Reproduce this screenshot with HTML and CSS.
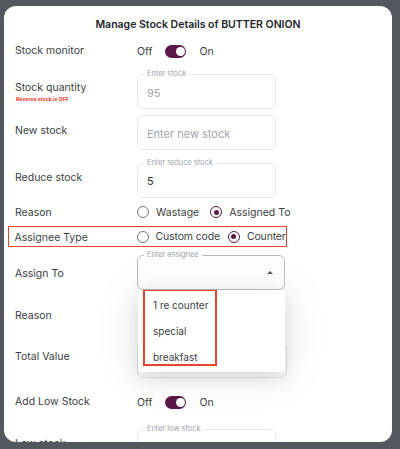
FILE: index.html
```html
<!DOCTYPE html>
<html lang="en">
<head>
<meta charset="utf-8">
<title>Manage Stock</title>
<link rel="stylesheet" href="styles.css">
</head>
<body>
<div class="modal">
  <h2 class="title">Manage Stock Details of BUTTER ONION</h2>

  <div class="row r-monitor">
    <div class="label">Stock monitor</div>
    <div class="toggle-group">
      <span>Off</span><span class="toggle"><span class="knob"></span></span><span>On</span>
    </div>
  </div>

  <div class="row r-qty">
    <div class="label">Stock quantity<div class="warn">Reverse stock is OFF</div></div>
    <div class="field"><span class="legend">Enter stock</span><span class="value muted">95</span></div>
  </div>

  <div class="row r-new">
    <div class="label">New stock</div>
    <div class="field"><span class="value placeholder">Enter new stock</span></div>
  </div>

  <div class="row r-reduce">
    <div class="label">Reduce stock</div>
    <div class="field"><span class="legend">Enter reduce stock</span><span class="value">5</span></div>
  </div>

  <div class="row r-reason">
    <div class="label">Reason</div>
    <div class="radios">
      <span class="radio"></span><span class="rtext">Wastage</span>
      <span class="radio checked"></span><span class="rtext">Assigned To</span>
    </div>
  </div>

  <div class="row r-assignee highlight">
    <div class="label">Assignee Type</div>
    <div class="radios">
      <span class="radio"></span><span class="rtext">Custom code</span>
      <span class="radio checked r-gap"></span><span class="rtext">Counter</span>
    </div>
  </div>

  <div class="row r-assign">
    <div class="label">Assign To</div>
    <div class="select-wrap">
      <div class="field select"><span class="legend">Enter assignee</span><span class="caret"></span></div>
      <div class="menu">
        <div class="menu-mark">
          <div class="option">1 re counter</div>
          <div class="option">special</div>
          <div class="option">breakfast</div>
        </div>
      </div>
    </div>
  </div>

  <div class="row r-reason2">
    <div class="label">Reason</div>
  </div>

  <div class="row r-total">
    <div class="label">Total Value</div>
    <div class="field wide"></div>
  </div>

  <div class="row r-low">
    <div class="label">Add Low Stock</div>
    <div class="toggle-group">
      <span>Off</span><span class="toggle"><span class="knob"></span></span><span>On</span>
    </div>
  </div>

  <div class="row r-lowinput">
    <div class="label">Low stock</div>
    <div class="field"><span class="legend">Enter low stock</span></div>
  </div>
</div>
</body>
</html>
```

FILE: styles.css
```css
html, body {
  margin: 0;
  padding: 0;
}
body {
  background: #53575e;
  font-family: Inter, "Noto Sans", sans-serif;
  font-size: 10.5px;
  color: #3a3d42;
  height: 449px;
  overflow: hidden;
}
.modal {
  margin: 6px 0 0 4px;
  width: 388px;
  height: 436px;
  background: #ffffff;
  border-radius: 12px;
  overflow: hidden;
  padding: 0 0 0 11px;
  box-sizing: border-box;
}
.title {
  margin: 0;
  padding-top: 12px;
  height: 14px;
  line-height: 14px;
  font-size: 10.5px;
  font-weight: 600;
  color: #23262b;
  text-align: center;
  padding-right: 11px;
}
.row {
  display: flex;
  align-items: center;
}
.label {
  width: 122px;
  flex: none;
  line-height: 14px;
  white-space: nowrap;
}
.warn {
  font-size: 5.2px;
  line-height: 7px;
  font-weight: 700;
  color: #ef3b2d;
  margin-left: 1px;
  margin-top: 1px;
}

/* toggles */
.toggle-group {
  display: flex;
  align-items: center;
  color: #3a3d42;
}
.toggle {
  width: 21px;
  height: 13px;
  border-radius: 7px;
  background: #5b1747;
  margin: 0 13px 0 13px;
  display: flex;
  align-items: center;
  justify-content: flex-end;
  padding: 0 1.5px;
  box-sizing: border-box;
}
.knob {
  width: 9px;
  height: 9px;
  border-radius: 50%;
  background: #fff;
}

/* fields */
.field {
  position: relative;
  width: 139px;
  height: 35px;
  border: 1px solid #e6e8eb;
  border-radius: 6px;
  box-sizing: border-box;
  display: flex;
  align-items: center;
  padding-left: 9px;
}
.field.wide { width: 150px; }
.legend {
  position: absolute;
  top: -6px;
  left: 6px;
  padding: 0 3px;
  background: #fff;
  font-size: 7.4px;
  line-height: 10px;
  color: #9ea3ab;
  white-space: nowrap;
}
.value {
  font-size: 11px;
  color: #2d3035;
  padding-top: 2px;
}
.value.muted { color: #a1a5ac; }
.value.placeholder { color: #a1a5ac; }

/* radios */
.radios {
  display: flex;
  align-items: center;
}
.radio {
  width: 12px;
  height: 12px;
  flex: none;
  border: 1.2px solid #6e737b;
  border-radius: 50%;
  box-sizing: border-box;
  display: flex;
  align-items: center;
  justify-content: center;
  margin-right: 7px;
}
.radio.checked {
  border-color: #5b1747;
  margin-left: 11px;
}
.radio.checked::after {
  content: "";
  width: 5px;
  height: 5px;
  border-radius: 50%;
  background: #5b1747;
}
.radio.r-gap { margin-left: 8px; }
.rtext {
  color: #3a3d42;
  white-space: nowrap;
}
.highlight .rtext { letter-spacing: -0.15px; }

/* select + menu */
.select-wrap {
  position: relative;
}
.field.select {
  width: 148px;
  border-color: #b9bcc2;
}
.caret {
  position: absolute;
  right: 11px;
  top: 15px;
  width: 0;
  height: 0;
  border-left: 3.5px solid transparent;
  border-right: 3.5px solid transparent;
  border-bottom: 3.5px solid #555a61;
}
.menu {
  position: absolute;
  top: 35px;
  left: 1px;
  width: 147px;
  height: 82px;
  background: #fff;
  border-radius: 4px;
  box-shadow: 0 6px 18px rgba(0, 0, 0, 0.12), 0 2px 40px 10px rgba(0, 0, 0, 0.05);
  z-index: 2;
}
.menu-mark {
  margin-left: 5px;
  width: 74px;
  height: 76px;
  border: 2px solid #e8432f;
  border-top-width: 1px;
  box-sizing: border-box;
  padding-top: 1px;
}
.option {
  height: 26px;
  line-height: 26px;
  padding-left: 8px;
  font-size: 10px;
  color: #3a3d42;
}

/* row placement */
.r-monitor { margin-top: 7px; height: 24px; }
.r-qty { margin-top: 11px; height: 35px; }
.r-qty .label { margin-top: 1px; }
.r-new { margin-top: 6px; height: 35px; }
.r-new .label { margin-bottom: 3px; }
.r-reduce { margin-top: 12px; height: 36px; }
.r-reduce .label { margin-bottom: 5px; }
.r-reason { margin-top: 4px; height: 20px; }
.r-reason .label { margin-top: 2px; }
.r-assignee { margin-top: 4px; height: 21px; }
.highlight {
  margin-left: -7px;
  width: 279px;
  border: 1.5px solid #e8432f;
  box-sizing: border-box;
  padding-left: 5.5px;
}
.highlight .label { margin-top: 2px; }
.r-assign { margin-top: 8px; height: 35px; position: relative; z-index: 2; }
.r-assign .label { margin-top: 2px; }
.r-reason2 { margin-top: 16px; height: 20px; }
.r-total { margin-top: 17px; height: 35px; }
.r-total .label { margin-bottom: 8px; }
.r-low { margin-top: 14px; height: 20px; }
.r-lowinput { margin-top: 17px; height: 35px; }
.r-lowinput .label { margin-bottom: 6px; }
```
